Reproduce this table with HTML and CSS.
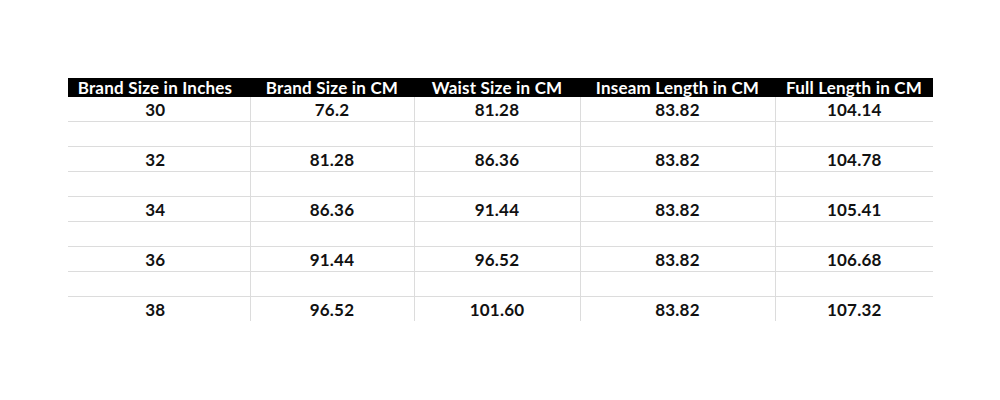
FILE: index.html
```html
<!DOCTYPE html>
<html>
<head>
<meta charset="utf-8">
<link rel="stylesheet" href="styles.css">
</head>
<body>
<div class="page">
<table class="sizes">
<colgroup>
<col style="width:182px"><col style="width:164px"><col style="width:166px"><col style="width:195px"><col style="width:158px">
</colgroup>
<thead>
<tr><th>Brand Size in Inches</th><th>Brand Size in CM</th><th>Waist Size in CM</th><th>Inseam Length in CM</th><th>Full Length in CM</th></tr>
</thead>
<tbody>
<tr><td>30</td><td>76.2</td><td>81.28</td><td>83.82</td><td>104.14</td></tr>
<tr class="blank"><td></td><td></td><td></td><td></td><td></td></tr>
<tr><td>32</td><td>81.28</td><td>86.36</td><td>83.82</td><td>104.78</td></tr>
<tr class="blank"><td></td><td></td><td></td><td></td><td></td></tr>
<tr><td>34</td><td>86.36</td><td>91.44</td><td>83.82</td><td>105.41</td></tr>
<tr class="blank"><td></td><td></td><td></td><td></td><td></td></tr>
<tr><td>36</td><td>91.44</td><td>96.52</td><td>83.82</td><td>106.68</td></tr>
<tr class="blank"><td></td><td></td><td></td><td></td><td></td></tr>
<tr class="last"><td>38</td><td>96.52</td><td>101.60</td><td>83.82</td><td>107.32</td></tr>
</tbody>
</table>
</div>
</body>
</html>
```
FILE: styles.css
```css
html, body {
  margin: 0;
  padding: 0;
  background: #ffffff;
}
.page {
  padding: 78px 0 0 68px;
}
.sizes {
  border-collapse: collapse;
  table-layout: fixed;
  width: 865px;
  font-family: "Lato", "Open Sans", sans-serif;
  font-weight: 700;
  font-size: 17px;
  letter-spacing: 0.2px;
  color: #111111;
}
.sizes th {
  background: #000000;
  color: #ffffff;
  height: 19px;
  padding: 0;
  line-height: 19px;
  text-align: center;
  font-weight: 700;
  white-space: nowrap;
}
.sizes th:first-child {
  padding-right: 8px;
}
.sizes td {
  height: 24px;
  padding: 0;
  text-align: center;
  border-bottom: 1px solid #dcdcdc;
  border-left: 1px solid #dcdcdc;
}
.sizes td:first-child {
  border-left: none;
  padding-right: 7px;
}
.sizes tr.last td {
  border-bottom: none;
}
```
